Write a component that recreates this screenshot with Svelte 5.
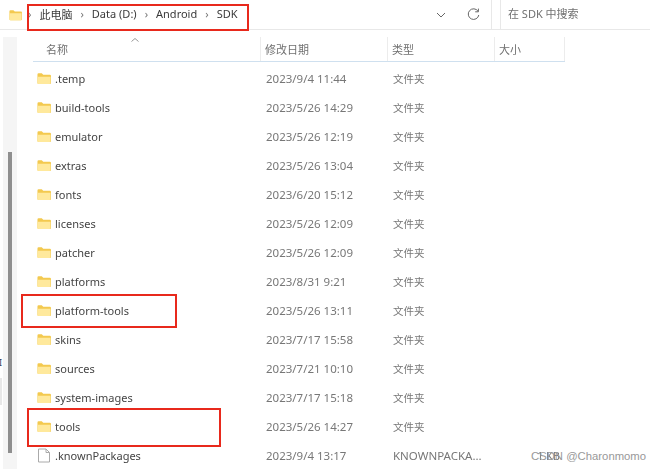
<script lang="ts">
  const rows = [
    { name: '.temp', date: '2023/9/4 11:44', type: '文件夹' },
    { name: 'build-tools', date: '2023/5/26 14:29', type: '文件夹' },
    { name: 'emulator', date: '2023/5/26 12:19', type: '文件夹' },
    { name: 'extras', date: '2023/5/26 13:04', type: '文件夹' },
    { name: 'fonts', date: '2023/6/20 15:12', type: '文件夹' },
    { name: 'licenses', date: '2023/5/26 12:09', type: '文件夹' },
    { name: 'patcher', date: '2023/5/26 12:09', type: '文件夹' },
    { name: 'platforms', date: '2023/8/31 9:21', type: '文件夹' },
    { name: 'platform-tools', date: '2023/5/26 13:11', type: '文件夹' },
    { name: 'skins', date: '2023/7/17 15:58', type: '文件夹' },
    { name: 'sources', date: '2023/7/21 10:10', type: '文件夹' },
    { name: 'system-images', date: '2023/7/17 15:18', type: '文件夹' },
    { name: 'tools', date: '2023/5/26 14:27', type: '文件夹' },
    { name: '.knownPackages', date: '2023/9/4 13:17', type: 'KNOWNPACKA...', size: '1 KB', file: true }
  ];
  const crumbs = ['此电脑', 'Data (D:)', 'Android', 'SDK'];
</script>

{#snippet folder()}
  <svg class="icon" width="15" height="13" viewBox="0 0 15 13">
    <path d="M0.5 2.2q0-1.2 1.2-1.2h3.4l1.6 1.6h7.1q1.2 0 1.2 1.2v7.5q0 1.2-1.2 1.2H1.7q-1.2 0-1.2-1.2z" fill="#f3c94f" />
    <path d="M0.5 4.6h14v6.5q0 1.4-1.2 1.4H1.7q-1.2 0-1.2-1.4z" fill="#ffe99c" />
  </svg>
{/snippet}

<div class="window">
  <div class="soft">
    <div class="toolbar">
      <svg class="top-folder" width="13" height="12" viewBox="0 0 15 13">
        <path d="M0.5 2.2q0-1.2 1.2-1.2h3.4l1.6 1.6h7.1q1.2 0 1.2 1.2v7.5q0 1.2-1.2 1.2H1.7q-1.2 0-1.2-1.2z" fill="#f3c94f" />
        <path d="M0.5 4.6h14v6.5q0 1.4-1.2 1.4H1.7q-1.2 0-1.2-1.4z" fill="#ffe99c" />
      </svg>
      <div class="crumbs">
        <span class="sep">›</span>
        {#each crumbs as crumb, i}
          <span class="crumb">{crumb}</span>
          {#if i < crumbs.length - 1}<span class="sep">›</span>{/if}
        {/each}
      </div>
      <svg class="chevron" width="10" height="6" viewBox="0 0 10 6">
        <path d="M1 1l4 4 4-4" fill="none" stroke="#666" stroke-width="1" />
      </svg>
      <svg class="refresh" width="13" height="13" viewBox="0 0 13 13">
        <path d="M11 3.2A5.3 5.3 0 1 0 11.8 7" fill="none" stroke="#666" stroke-width="1" />
        <path d="M11.4 0.6v3.2H8.2" fill="none" stroke="#666" stroke-width="1" />
      </svg>
      <div class="divider"></div>
      <div class="search">在 SDK 中搜索</div>
    </div>

    <div class="body">
      <div class="gutter"><div class="thumb"></div></div>
      <div class="list">
        <div class="sort-wrap">
          <svg class="sort" width="8" height="4" viewBox="0 0 8 4">
            <path d="M0.5 3.5L4 0.5l3.5 3" fill="none" stroke="#999" stroke-width="1" />
          </svg>
        </div>
        <div class="head">
          <div class="col first">名称</div>
          <div class="col">修改日期</div>
          <div class="col">类型</div>
          <div class="col last">大小</div>
        </div>
        {#each rows as row}
          <div class="row">
            <div class="name">
              {#if row.file}
                <svg class="icon" width="13" height="15" viewBox="0 0 13 15">
                  <path d="M1 1h7.5L12 4.5V14H1z" fill="#fff" stroke="#aaa" />
                  <path d="M8.5 1v3.5H12" fill="none" stroke="#aaa" />
                </svg>
              {:else}
                {@render folder()}
              {/if}
              <span>{row.name}</span>
            </div>
            <div class="date">{row.date}</div>
            <div class="type" class:cjk={!row.file}>{row.type}</div>
            <div class="size">{row.size ?? ''}</div>
          </div>
        {/each}
      </div>
    </div>
  </div>

  <div class="edge-mark">I</div>
  <div class="edge-box"></div>
  <div class="mark box-a"></div>
  <div class="mark box-b"></div>
  <div class="mark box-c"></div>
  <div class="watermark">CSDN @Charonmomo</div>
</div>

<style>
:global(body) {
  margin: 0;
  background: #fff;
}

.window {
  position: relative;
  width: 650px;
  height: 469px;
  overflow: hidden;
  background: #fff;
  font-family: "Noto Sans", "Noto Sans CJK SC", sans-serif;
  font-size: 11px;
  color: #3c3c3c;
}

/* the reference is a rescaled capture, everything under the red marks is a bit soft */
.soft {
  filter: blur(0.35px);
}

.toolbar {
  display: flex;
  align-items: center;
  height: 29px;
  border-bottom: 1px solid #e8e8e8;
  box-sizing: content-box;
  padding-bottom: 0;
}

.top-folder {
  margin-left: 9px;
  flex: none;
}

.crumbs {
  display: flex;
  align-items: center;
  margin-left: 6px;
  margin-top: -2px;
  width: 394px;
  flex: none;
}

.crumb {
  color: #3a3a3a;
  white-space: nowrap;
}

.sep {
  color: #777;
  margin: 0 8px 0 0;
  font-size: 11px;
}

.crumb + .sep {
  margin-left: 8px;
}

.chevron {
  margin-left: 14px;
  flex: none;
}

.refresh {
  margin-left: 21px;
  flex: none;
}

.divider {
  width: 1px;
  height: 29px;
  margin-left: 11px;
  background: #e8e8e8;
  flex: none;
}

.search {
  margin-left: 8px;
  height: 29px;
  line-height: 28px;
  flex: 1;
  padding-left: 7px;
  border-left: 1px solid #e8e8e8;
  color: #707070;
  font-size: 11px;
}

.body {
  display: flex;
  height: 439px;
}

.gutter {
  width: 14px;
  margin: 7px 0 0 3px;
  height: 432px;
  background: #f5f5f5;
  flex: none;
  padding-top: 115px;
  box-sizing: border-box;
}

.thumb {
  width: 4px;
  height: 301px;
  margin-left: 5px;
  background: #8f8f8f;
}

.list {
  flex: 1;
  position: relative;
  padding-left: 16px;
}

.sort-wrap {
  position: absolute;
  left: 114px;
  top: 8px;
  line-height: 0;
}

.head {
  display: grid;
  grid-template-columns: 228px 127px 107px 70px;
  width: 532px;
  height: 24px;
  margin-top: 7px;
  border-bottom: 1px solid #cfe0ef;
  box-sizing: content-box;
  color: #707070;
}

.col {
  display: flex;
  align-items: center;
  padding-left: 4px;
  border-right: 1px solid #ececec;
  font-size: 11px;
  height: 24px;
}

.col.first {
  padding-left: 13px;
}

.row {
  display: grid;
  grid-template-columns: 228px 127px 107px 70px;
  width: 532px;
  height: 29px;
  align-items: center;
  color: #777;
}

.head + .row {
  margin-top: 2px;
}

.name {
  display: flex;
  align-items: center;
  padding-left: 4px;
  color: #444;
  font-size: 11px;
}

.icon {
  flex: none;
  width: 14px;
  margin-right: 4px;
}

.date, .type {
  padding-left: 5px;
  font-size: 11.5px;
  white-space: nowrap;
}

.type.cjk {
  font-size: 10.5px;
}

.size {
  text-align: right;
  padding-right: 5px;
  font-size: 11px;
}

/* annotations drawn on top of the screenshot */
.mark {
  position: absolute;
  box-sizing: border-box;
  border: 2px solid #e8291c;
}

.box-a {
  left: 27px;
  top: 4px;
  width: 222px;
  height: 27px;
}

.box-b {
  left: 21px;
  top: 294px;
  width: 156px;
  height: 34px;
}

.box-c {
  left: 27px;
  top: 408px;
  width: 194px;
  height: 39px;
}

.edge-mark {
  position: absolute;
  left: -1px;
  top: 356px;
  font-size: 9px;
  color: #345;
}

.edge-box {
  position: absolute;
  left: 0;
  top: 378px;
  width: 2px;
  height: 27px;
  background: #e8e8e8;
}

.watermark {
  position: absolute;
  left: 531px;
  top: 450px;
  font-family: "Liberation Sans", sans-serif;
  font-size: 11.3px;
  color: #999;
}
</style>
